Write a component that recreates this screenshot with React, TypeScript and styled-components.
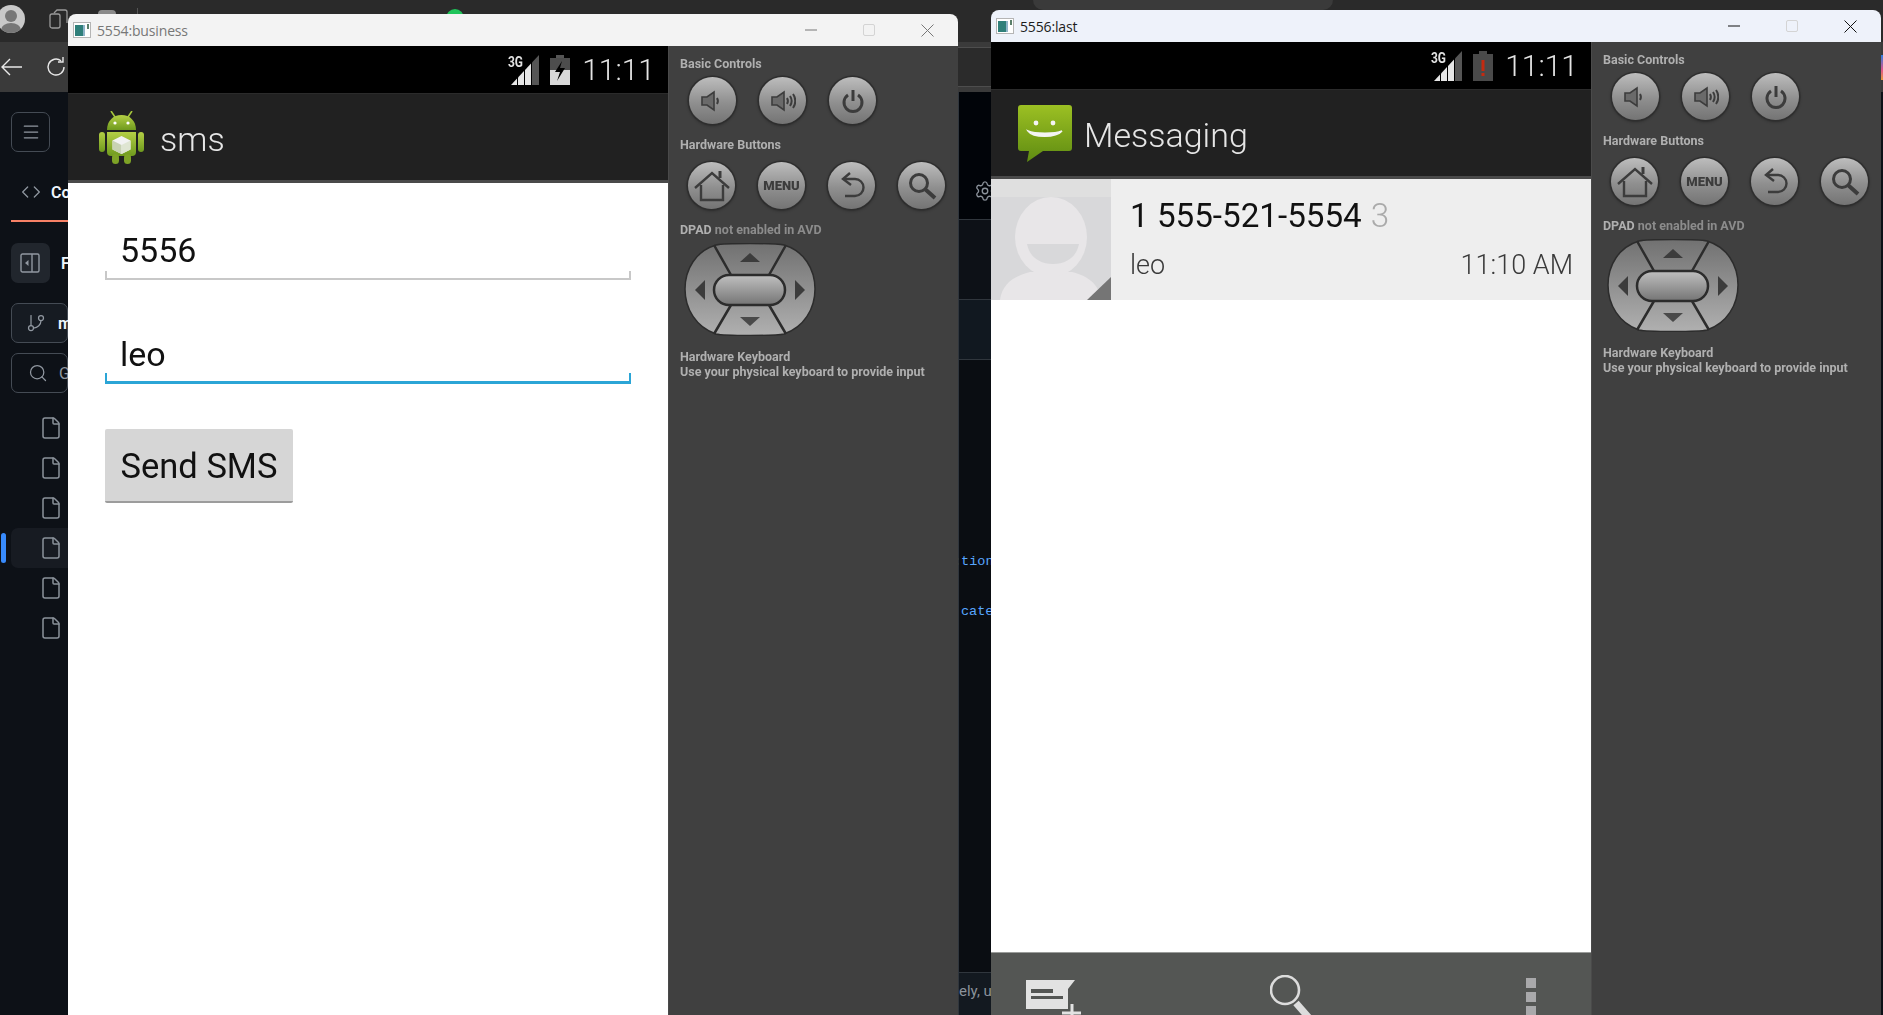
import {ReactNode} from 'react';
import styled, {createGlobalStyle} from 'styled-components';
import {Code, File, GitBranch, Menu, Search, Settings} from 'lucide-react';

const GlobalStyle = createGlobalStyle`
  html, body {
    margin: 0;
    padding: 0;
    background: #0d1117;
    overflow: hidden;
  }
  * {
    box-sizing: border-box;
  }
  svg {
    flex-shrink: 0;
  }
`;

const Desktop = styled.div`
  position: relative;
  width: 1883px;
  height: 1015px;
  overflow: hidden;
  font-family: Roboto, 'Liberation Sans', sans-serif;
`;

/* browser left open behind the emulators */
const Backdrop = styled.div`
  width: 100%;
  height: 100%;
  display: flex;
  flex-direction: column;
`;

const BrowserTabs = styled.div`
  height: 42px;
  flex-shrink: 0;
  background: #2a2a2a;
  display: flex;
  align-items: flex-start;
`;

const Profile = styled.div`
  width: 28px;
  height: 28px;
  margin: 5px 0 0 -3px;
  border-radius: 50%;
  background: #c9c9c9;
  overflow: hidden;
  flex-shrink: 0;
`;

const TabStack = styled.div`
  margin: 9px 0 0 24px;
  color: #9a9a9a;
  display: flex;
`;

const TabStub = styled.div`
  width: 18px;
  height: 22px;
  margin: 10px 0 0 29px;
  border-radius: 4px;
  background: #8a8a8a;
`;

const TabDivider = styled.div`
  width: 1px;
  height: 22px;
  margin: 8px 0 0 21px;
  background: #555;
`;

const GreenDot = styled.div`
  width: 18px;
  height: 18px;
  margin: 9px 0 0 308px;
  border-radius: 50%;
  background: #1fc45a;
`;

const OpenTab = styled.div`
  width: 300px;
  height: 22px;
  margin: -12px 0 0 569px;
  border-radius: 10px;
  background: #3a3a3a;
`;

const BrowserNav = styled.div`
  height: 50px;
  flex-shrink: 0;
  background: #3a3a3a;
  display: flex;
  align-items: center;
  color: #e8e8e8;
`;

const NavIcon = styled.div<{$left: number}>`
  margin-left: ${({$left}) => $left}px;
  display: flex;
`;

const AddressBar = styled.div`
  flex: 1;
  height: 40px;
  margin-left: 100px;
  background: #2b2b2b;
  border-top: 1px solid #4d4d4d;
  border-bottom: 1px solid #4d4d4d;
`;

const EdgeMark = styled.div`
  width: 2px;
  height: 25px;
  background: linear-gradient(#2f7de0, #e0558a 60%, #e89a3c);
`;

const RepoBody = styled.div`
  flex: 1;
  display: grid;
  grid-template-columns: 68px 890px 33px 1fr;
  background: #0d1117;
  min-height: 0;
`;

const Rail = styled.div`
  padding: 20px 0 0 11px;
  display: flex;
  flex-direction: column;
`;

const RailBox = styled.div<{$width?: number; $fill?: string; $plain?: boolean; $top: number; $gap?: number; $pad?: number}>`
  width: ${({$width}) => ($width ? `${$width}px` : 'auto')};
  height: 40px;
  margin-top: ${({$top}) => $top}px;
  flex-shrink: 0;
  background: ${({$fill}) => $fill || 'transparent'};
  border: ${({$plain}) => ($plain ? 'none' : '1px solid #444b54')};
  border-radius: 7px;
  color: #9198a1;
  display: flex;
  align-items: center;
  gap: ${({$gap}) => $gap || 12}px;
  padding-left: ${({$pad}) => $pad || 9}px;
  white-space: nowrap;
`;

const RailTab = styled.div`
  height: 50px;
  margin-top: 20px;
  flex-shrink: 0;
  border-bottom: 2px solid #f78166;
  color: #9198a1;
  display: flex;
  align-items: center;
  gap: 10px;
  padding: 0 0 8px 10px;
  white-space: nowrap;
`;

const RailText = styled.span`
  color: #f0f6fc;
  font-size: 16px;
  font-weight: 600;
`;

const FileList = styled.div`
  margin-top: 15px;
  display: flex;
  flex-direction: column;
`;

const FileRow = styled.div<{$selected?: boolean}>`
  position: relative;
  height: 40px;
  padding-left: 28px;
  display: flex;
  align-items: center;
  color: #8b929b;
  border-radius: 7px 0 0 7px;
  background: ${({$selected}) => ($selected ? '#171b22' : 'transparent')};

  &::before {
    content: '';
    display: ${({$selected}) => ($selected ? 'block' : 'none')};
    position: absolute;
    left: -10px;
    top: 5px;
    width: 5px;
    height: 30px;
    border-radius: 3px;
    background: #388bfd;
  }
`;

const CodeStrip = styled.div`
  grid-column: 3;
  display: flex;
  flex-direction: column;
  border-left: 1px solid #30363d;
`;

const StripHead = styled.div`
  height: 128px;
  flex-shrink: 0;
  background: #010409;
  border-bottom: 1px solid #30363d;
  display: flex;
  align-items: flex-end;
  padding: 0 0 17px 15px;
  color: #8b929b;
`;

const StripRow = styled.div<{$height: number; $fill: string}>`
  height: ${({$height}) => $height}px;
  flex-shrink: 0;
  background: ${({$fill}) => $fill};
  border-bottom: 1px solid #30363d;
`;

const StripCode = styled.div`
  flex: 1;
  padding-top: 177px;
  background: #0a0d12;
  font-family: 'Liberation Mono', monospace;
  font-size: 13.5px;
  line-height: 50px;
  color: #58a6ff;
`;

const CodeLine = styled.div<{$indent: number}>`
  white-space: nowrap;
  margin-left: ${({$indent}) => $indent}px;
`;

const StripFoot = styled.div`
  height: 43px;
  flex-shrink: 0;
  background: #131920;
  border-top: 1px solid #30363d;
  font-size: 15px;
  line-height: 36px;
  color: #8b929b;
  white-space: nowrap;
`;

/* emulator windows */
const Window = styled.div<{$left: number; $top: number; $width: number}>`
  position: absolute;
  left: ${({$left}) => $left}px;
  top: ${({$top}) => $top}px;
  width: ${({$width}) => $width}px;
  height: ${({$top}) => 1015 - $top}px;
  display: flex;
  flex-direction: column;
  border-radius: 8px 8px 0 0;
  overflow: hidden;
`;

const TitleBar = styled.div<{$active?: boolean}>`
  height: 32px;
  flex-shrink: 0;
  background: ${({$active}) => ($active ? '#eef2fa' : '#f3f3f3')};
  color: ${({$active}) => ($active ? '#1c1c1c' : '#777')};
  display: flex;
  align-items: center;
  padding: 0 24px 0 5px;
  font-family: 'Open Sans', sans-serif;
  font-size: 14px;
`;

const TitleIcon = styled.svg`
  margin-right: 6px;
`;

const TitleText = styled.span`
  flex: 1;
  letter-spacing: -0.15px;
`;

const TitleControls = styled.div`
  display: flex;
  align-items: center;
  gap: 46px;
`;

const MaxBox = styled.div`
  width: 12px;
  height: 12px;
  border: 1px solid #d4d4d4;
  border-radius: 2px;
`;

const WindowBody = styled.div`
  flex: 1;
  display: flex;
  min-height: 0;
  filter: blur(0.35px);
`;

const Phone = styled.div`
  width: 600px;
  flex-shrink: 0;
  display: flex;
  flex-direction: column;
  background: #fff;
`;

const StatusBar = styled.div`
  height: 47px;
  flex-shrink: 0;
  background: #000;
  display: flex;
  align-items: center;
  justify-content: flex-end;
  gap: 11px;
  padding-right: 13px;
`;

const Clock = styled.span`
  margin-left: 1px;
  font-size: 30px;
  font-weight: 300;
  line-height: 1;
  color: #e4e4e4;
`;

const ActionBar = styled.div<{$left: number; $gap: number}>`
  height: 90px;
  flex-shrink: 0;
  background: #212121;
  border-top: 1px solid #2b2b2b;
  border-bottom: 3px solid #4a4a4a;
  display: flex;
  align-items: center;
  padding-left: ${({$left}) => $left}px;
  gap: ${({$gap}) => $gap}px;
`;

const ActionTitle = styled.span`
  color: #e6e6e6;
  font-size: 34px;
  font-weight: 300;
  padding-top: 3px;
`;

const FormScreen = styled.div`
  flex: 1;
  padding: 39px 37px 0 37px;
  display: flex;
  flex-direction: column;
`;

const Field = styled.div<{$focused?: boolean}>`
  position: relative;
  height: 58px;
  flex-shrink: 0;
  padding-left: 15px;
  font-size: 34px;
  line-height: 57px;
  color: #111;
  border-bottom: ${({$focused}) => ($focused ? '3px solid #2ba5d6' : '2px solid #c8c8c8')};
  margin-bottom: 46px;

  &::before,
  &::after {
    content: '';
    position: absolute;
    bottom: 0;
    width: 2px;
    height: ${({$focused}) => ($focused ? 8 : 7)}px;
    background: ${({$focused}) => ($focused ? '#2ba5d6' : '#c8c8c8')};
  }
  &::before {
    left: 0;
  }
  &::after {
    right: 0;
  }
`;

const SendButton = styled.button`
  width: 188px;
  height: 74px;
  margin-top: -1px;
  border: none;
  border-bottom: 2px solid #9c9c9c;
  border-radius: 2px;
  background: #d6d6d6;
  color: #111;
  font-family: inherit;
  font-size: 34.5px;
  padding: 2px 0 0;
`;

const ThreadScreen = styled.div`
  flex: 1;
  display: flex;
  flex-direction: column;
  min-height: 0;
`;

const ThreadRow = styled.div`
  height: 121px;
  flex-shrink: 0;
  display: flex;
  background: #eeeeee;
`;

const ThreadText = styled.div`
  flex: 1;
  padding: 17px 18px 0 19px;
`;

const ThreadName = styled.div`
  font-size: 33.2px;
  line-height: 40px;
  color: #111;
`;

const ThreadCount = styled.span`
  color: #aaa;
  font-weight: 300;
  margin-left: 9px;
`;

const ThreadMeta = styled.div`
  margin-top: 9px;
  display: flex;
  justify-content: space-between;
  font-size: 27px;
  line-height: 40px;
  color: #3a3a3a;
  font-weight: 300;
`;

const ThreadGap = styled.div`
  flex: 1;
  background: #fff;
`;

const BottomBar = styled.div`
  height: 63px;
  flex-shrink: 0;
  background: #545654;
  border-top: 1px solid #9a9c9a;
  display: flex;
  justify-content: space-between;
  padding: 22px 55px 0 35px;
  overflow: hidden;
`;

const Dots = styled.div`
  display: flex;
  flex-direction: column;
  gap: 4px;
  padding-top: 3px;
`;

const Dot = styled.div`
  width: 10px;
  height: 10px;
  flex-shrink: 0;
  background: #a9a9ab;
`;

const Panel = styled.div`
  flex: 1;
  background: #404040;
  border-left: 1px solid #4a4a4a;
  padding: 10px 0 0 11px;
  font-size: 12.5px;
  font-weight: 700;
  color: #b0b0b0;
`;

const PanelLabel = styled.div<{$top?: number}>`
  margin-top: ${({$top}) => $top || 0}px;
  line-height: 16px;
  white-space: nowrap;
`;

const Muted = styled.span`
  color: #8c8c8c;
`;

const ButtonRow = styled.div<{$left: number; $top: number}>`
  display: flex;
  gap: 23px;
  margin: ${({$top}) => $top}px 0 0 ${({$left}) => $left}px;
`;

const RoundButton = styled.div`
  width: 47px;
  height: 47px;
  border-radius: 50%;
  background: linear-gradient(#bdbdbd, #8f8f8f 55%, #747474);
  box-shadow: 0 0 0 1.5px #2e2e2e, 0 1px 3px 1px rgba(0, 0, 0, 0.3);
  display: flex;
  align-items: center;
  justify-content: center;
  color: #3c3c3c;
`;

const MenuLabel = styled.span`
  font-size: 13px;
  font-weight: 900;
  color: #3c3c3c;
`;

const Dpad = styled.svg`
  display: block;
  margin: 5px 0 0 4px;
`;

const KeyboardNote = styled.div`
  margin-top: 13px;
  line-height: 15px;
  white-space: nowrap;
`;

const Caption = ({children, active}: {children: ReactNode; active?: boolean}) => (
  <TitleBar $active={active}>
    <TitleIcon width="18" height="16" viewBox="0 0 18 16">
      <rect x="0.5" y="0.5" width="17" height="15" fill="#fff" stroke="#b5b5b5" />
      <rect x="2" y="3" width="8" height="11" fill="#2f7f7a" />
      <rect x="10" y="3" width="2" height="11" fill="#8fb4c8" />
      <rect x="14" y="2" width="2" height="5" fill="#5a7f6a" />
    </TitleIcon>
    <TitleText>{children}</TitleText>
    <TitleControls>
      <svg width="12" height="12" viewBox="0 0 12 12">
        <path d="M0 6h12" stroke={active ? '#111' : '#777'} strokeWidth="1" />
      </svg>
      <MaxBox />
      <svg width="13" height="13" viewBox="0 0 13 13">
        <path d="M0.5 0.5l12 12M12.5 0.5l-12 12" stroke={active ? '#111' : '#777'} strokeWidth="1" fill="none" />
      </svg>
    </TitleControls>
  </TitleBar>
);

const SignalIcon = () => (
  <svg width="31" height="30" viewBox="0 0 31 30">
    <text x="0" y="12" fontFamily="Roboto, sans-serif" fontWeight="700" fontSize="14" fill="#e2e2e2" textLength="15" lengthAdjust="spacingAndGlyphs">
      3G
    </text>
    <path d="M3 30l6-6.4V30z" fill="#e6e6e6" />
    <path d="M10 30v-7.5l6-6.4V30z" fill="#e6e6e6" />
    <path d="M17 30V15l6-6.4V30z" fill="#e6e6e6" />
    <path d="M24 30V7.5L31 0v30z" fill="#555" />
  </svg>
);

const ChargingBattery = () => (
  <svg width="20" height="30" viewBox="0 0 20 30">
    <rect x="6" y="0" width="8" height="3" fill="#555" />
    <rect x="0" y="3" width="20" height="27" fill="#d8d8d8" />
    <rect x="0" y="3" width="20" height="12" fill="#4d4d4d" />
    <path d="M12 6L5 17h5l-3 9 8-13h-5z" fill="#000" />
  </svg>
);

const AlertBattery = () => (
  <svg width="20" height="30" viewBox="0 0 20 30">
    <rect x="6" y="0" width="8" height="3" fill="#4a4a4a" />
    <rect x="0" y="3" width="20" height="27" fill="#4a4a4a" />
    <rect x="8.5" y="9" width="3" height="11" fill="#c42a10" />
    <rect x="8.5" y="22" width="3" height="3" fill="#c42a10" />
  </svg>
);

const AndroidIcon = () => (
  <svg width="45" height="53" viewBox="0 0 45 53">
    <defs>
      <linearGradient id="droid" x1="0" y1="0" x2="0" y2="1">
        <stop offset="0" stopColor="#b4cf45" />
        <stop offset="1" stopColor="#6f9a1e" />
      </linearGradient>
    </defs>
    <path d="M12 0l4 6M33 0l-4 6" stroke="#a6c63c" strokeWidth="1.6" />
    <path d="M8 19C8 10 14 4 22.5 4S37 10 37 19z" fill="url(#droid)" />
    <circle cx="16" cy="12" r="1.6" fill="#fff" />
    <circle cx="29" cy="12" r="1.6" fill="#fff" />
    <path d="M8 21h29v20a4 4 0 0 1-4 4H12a4 4 0 0 1-4-4z" fill="url(#droid)" />
    <rect x="0" y="21" width="6" height="20" rx="3" fill="url(#droid)" />
    <rect x="39" y="21" width="6" height="20" rx="3" fill="url(#droid)" />
    <rect x="13" y="43" width="7" height="10" rx="3.5" fill="#7ea326" />
    <rect x="25" y="43" width="7" height="10" rx="3.5" fill="#7ea326" />
    <path d="M22.5 25l9 4.5v9L22.5 43l-9-4.5v-9z" fill="#f2f2f2" />
    <path d="M22.5 34v9l-9-4.5v-9z" fill="#c8d2b4" />
    <path d="M22.5 34v9l9-4.5v-9z" fill="#dfe5d2" />
  </svg>
);

const MessagingIcon = () => (
  <svg width="54" height="57" viewBox="0 0 54 57">
    <defs>
      <linearGradient id="bubble" x1="0" y1="0" x2="0" y2="1">
        <stop offset="0" stopColor="#9cc023" />
        <stop offset="1" stopColor="#5f8c12" />
      </linearGradient>
    </defs>
    <path d="M3 0h48a3 3 0 0 1 3 3v40a3 3 0 0 1-3 3H25L9 57l2-11H3a3 3 0 0 1-3-3V3a3 3 0 0 1 3-3z" fill="url(#bubble)" />
    <circle cx="18" cy="18" r="2.4" fill="#f4f4f4" />
    <circle cx="35" cy="18" r="2.4" fill="#f4f4f4" />
    <path d="M10 26c5 7 28 7 34 0-7 3-27 3-34 0z" fill="#f4f4f4" stroke="#f4f4f4" strokeWidth="1.4" />
  </svg>
);

const ContactAvatar = () => (
  <svg width="120" height="121" viewBox="0 0 120 121" style={{display: 'block'}}>
    <rect width="120" height="121" fill="#d8d8da" />
    <rect width="120" height="18" fill="#dfdfdf" />
    <path d="M9 121c2-16 14-24 30-28h42c16 4 27 12 29 28z" fill="#e8e6e8" />
    <ellipse cx="60" cy="58" rx="36" ry="40" fill="#e8e6e8" />
    <path d="M36 65h52c-2 12-12 20-26 20s-24-8-26-20z" fill="#d8d8da" />
    <path d="M96 121l24-23v23z" fill="#757575" />
  </svg>
);

const VolumeIcon = ({waves}: {waves: number}) => (
  <svg width="26" height="26" viewBox="0 0 26 26" fill="none" stroke="currentColor">
    <path d="M2 9h5l7-5v18l-7-5H2z" fill="#6a6a6a" stroke="currentColor" strokeWidth="1.6" />
    <path d="M17 10c1.2 2 1.2 4 0 6" strokeWidth="2" />
    {waves > 1 && <path d="M20 8c2 3 2 7 0 10" strokeWidth="2" />}
    {waves > 1 && <path d="M23 6c3 4 3 10 0 14" strokeWidth="2" />}
  </svg>
);

const PowerIcon = () => (
  <svg width="26" height="26" viewBox="0 0 26 26" fill="none" stroke="currentColor" strokeWidth="3">
    <path d="M8 7a9 9 0 1 0 10 0" />
    <path d="M13 2v11" />
  </svg>
);

const HomeIcon = () => (
  <svg width="36" height="32" viewBox="0 0 36 32" fill="none" stroke="currentColor" strokeWidth="2.4">
    <path d="M1 18L18 3l17 15" />
    <path d="M7 15v15h22V15" />
    <path d="M26 8V1" strokeWidth="3" />
  </svg>
);

const BackIcon = () => (
  <svg width="30" height="30" viewBox="0 0 30 30" fill="none" stroke="currentColor" strokeWidth="2.4">
    <path d="M13 2L6 8l8 6" />
    <path d="M7 8h11a8 8 0 0 1 0 17H8" />
  </svg>
);

const LensIcon = () => (
  <svg width="30" height="30" viewBox="0 0 30 30" fill="none" stroke="currentColor">
    <circle cx="12" cy="12" r="8.5" strokeWidth="3" />
    <path d="M18.5 18.5L28 27" strokeWidth="4" />
  </svg>
);

const DpadDrawing = ({id}: {id: string}) => (
  <Dpad width="132" height="93" viewBox="0 0 132 93">
    <defs>
      <linearGradient id={`${id}-pad`} x1="0" y1="0" x2="0" y2="1">
        <stop offset="0" stopColor="#717171" />
        <stop offset="1" stopColor="#b0b0b0" />
      </linearGradient>
      <linearGradient id={`${id}-pill`} x1="0" y1="0" x2="0" y2="1">
        <stop offset="0" stopColor="#c0c0c0" />
        <stop offset="1" stopColor="#757575" />
      </linearGradient>
    </defs>
    <path
      d="M32 2C12 8 1 26 1 46s11 38 31 45c8 2 60 2 68 0 20-7 31-25 31-45S120 8 100 2c-8-2-60-2-68 0z"
      fill={`url(#${id}-pad)`}
      stroke="#2c2c2c"
      strokeWidth="1.5"
    />
    <path d="M30 2l17 30M102 2L85 32M47 62L30 91M85 62l17 29" stroke="#2c2c2c" strokeWidth="2.5" />
    <rect x="30" y="32" width="71" height="30" rx="15" fill={`url(#${id}-pill)`} stroke="#2c2c2c" strokeWidth="2.5" />
    <path d="M56 19l10-9 10 9z" fill="#3c3c3c" />
    <path d="M56 74l10 9 10-9z" fill="#4a4a4a" />
    <path d="M21 37l-10 10 10 10z" fill="#3c3c3c" />
    <path d="M111 37l10 10-10 10z" fill="#3c3c3c" />
  </Dpad>
);

const ControlPanel = ({id}: {id: string}) => (
  <Panel>
    <PanelLabel>Basic Controls</PanelLabel>
    <ButtonRow $left={9} $top={5}>
      <RoundButton>
        <VolumeIcon waves={1} />
      </RoundButton>
      <RoundButton>
        <VolumeIcon waves={2} />
      </RoundButton>
      <RoundButton>
        <PowerIcon />
      </RoundButton>
    </ButtonRow>
    <PanelLabel $top={13}>Hardware Buttons</PanelLabel>
    <ButtonRow $left={8} $top={9}>
      <RoundButton>
        <HomeIcon />
      </RoundButton>
      <RoundButton>
        <MenuLabel>MENU</MenuLabel>
      </RoundButton>
      <RoundButton>
        <BackIcon />
      </RoundButton>
      <RoundButton>
        <LensIcon />
      </RoundButton>
    </ButtonRow>
    <PanelLabel $top={13}>
      DPAD <Muted>not enabled in AVD</Muted>
    </PanelLabel>
    <DpadDrawing id={id} />
    <KeyboardNote>
      Hardware Keyboard
      <br />
      Use your physical keyboard to provide input
    </KeyboardNote>
  </Panel>
);

const fileRows = [0, 1, 2, 3, 4, 5];

export default function App() {
  return (
    <Desktop>
      <GlobalStyle />
      <Backdrop>
        <BrowserTabs>
          <Profile>
            <svg width="28" height="28" viewBox="0 0 28 28">
              <circle cx="14" cy="11" r="6" fill="#777" />
              <ellipse cx="14" cy="25" rx="10" ry="7" fill="#777" />
            </svg>
          </Profile>
          <TabStack>
            <svg width="20" height="22" viewBox="0 0 20 22" fill="none" stroke="currentColor" strokeWidth="1.3">
              <rect x="1" y="5" width="10" height="14" rx="2" />
              <path d="M5 4l3-3h8a2 2 0 0 1 2 2v11" />
            </svg>
          </TabStack>
          <TabStub />
          <TabDivider />
          <GreenDot />
          <OpenTab />
        </BrowserTabs>
        <BrowserNav>
          <NavIcon $left={1}>
            <svg width="22" height="20" viewBox="0 0 22 20" fill="none" stroke="currentColor" strokeWidth="1.4">
              <path d="M21 10H1M9 2l-8 8 8 8" />
            </svg>
          </NavIcon>
          <NavIcon $left={22}>
            <svg width="22" height="22" viewBox="0 0 22 22" fill="none" stroke="currentColor" strokeWidth="1.4">
              <path d="M19 11a8 8 0 1 1-3-6.2M18 1v5h-5" />
            </svg>
          </NavIcon>
          <AddressBar />
          <EdgeMark />
        </BrowserNav>
        <RepoBody>
          <Rail>
            <RailBox $width={39} $top={0}>
              <Menu size={20} strokeWidth={1.5} />
            </RailBox>
            <RailTab>
              <Code size={20} strokeWidth={1.5} />
              <RailText>Code</RailText>
            </RailTab>
            <RailBox $width={39} $fill="#21262d" $plain $top={21} $gap={21}>
              <svg width="20" height="20" viewBox="0 0 20 20" fill="none" stroke="currentColor" strokeWidth="1.4">
                <rect x="1" y="1" width="18" height="18" rx="1.5" />
                <path d="M12 1v18" />
                <path d="M8.5 7v6L5 10z" fill="currentColor" stroke="none" />
              </svg>
              <RailText>Files</RailText>
            </RailBox>
            <RailBox $fill="#161b22" $top={20} $pad={14}>
              <GitBranch size={20} strokeWidth={1.5} />
              <RailText>main</RailText>
            </RailBox>
            <RailBox $top={10} $pad={16} $gap={11}>
              <Search size={20} strokeWidth={1.5} />
              <span>Go to file</span>
            </RailBox>
            <FileList>
              {fileRows.map((row) => (
                <FileRow key={row} $selected={row === 3}>
                  <File size={24} strokeWidth={1.5} />
                </FileRow>
              ))}
            </FileList>
          </Rail>
          <CodeStrip>
            <StripHead>
              <Settings size={22} strokeWidth={1.5} />
            </StripHead>
            <StripRow $height={80} $fill="#0d1117" />
            <StripRow $height={60} $fill="#111820" />
            <StripCode>
              <CodeLine $indent={-6}>:tion</CodeLine>
              <CodeLine $indent={2}>cate</CodeLine>
            </StripCode>
            <StripFoot>ely, u</StripFoot>
          </CodeStrip>
        </RepoBody>
      </Backdrop>

      <Window $left={68} $top={14} $width={890}>
        <Caption>5554:business</Caption>
        <WindowBody>
          <Phone>
            <StatusBar>
              <SignalIcon />
              <ChargingBattery />
              <Clock>11:11</Clock>
            </StatusBar>
            <ActionBar $left={31} $gap={16}>
              <AndroidIcon />
              <ActionTitle>sms</ActionTitle>
            </ActionBar>
            <FormScreen>
              <Field>5556</Field>
              <Field $focused>leo</Field>
              <SendButton>Send SMS</SendButton>
            </FormScreen>
          </Phone>
          <ControlPanel id="left" />
        </WindowBody>
      </Window>

      <Window $left={991} $top={10} $width={890}>
        <Caption active>5556:last</Caption>
        <WindowBody>
          <Phone>
            <StatusBar>
              <SignalIcon />
              <AlertBattery />
              <Clock>11:11</Clock>
            </StatusBar>
            <ActionBar $left={27} $gap={12}>
              <MessagingIcon />
              <ActionTitle>Messaging</ActionTitle>
            </ActionBar>
            <ThreadScreen>
              <ThreadRow>
                <ContactAvatar />
                <ThreadText>
                  <ThreadName>
                    1 555-521-5554
                    <ThreadCount>3</ThreadCount>
                  </ThreadName>
                  <ThreadMeta>
                    <span>leo</span>
                    <span>11:10 AM</span>
                  </ThreadMeta>
                </ThreadText>
              </ThreadRow>
              <ThreadGap />
              <BottomBar>
                <svg width="56" height="50" viewBox="0 0 56 50">
                  <path d="M0 5h49l-7 9v20H0z" fill="#e2e2e2" />
                  <path d="M5 14h22v4H5zM5 21h32v3H5z" fill="#545654" />
                  <path d="M46 29v20M36 38h19" stroke="#e2e2e2" strokeWidth="3" />
                </svg>
                <svg width="68" height="50" viewBox="0 0 68 50" fill="none" stroke="#dcdcdc">
                  <ellipse cx="15" cy="15" rx="14" ry="14" strokeWidth="2.6" />
                  <path d="M26 28l14 16" strokeWidth="7" />
                </svg>
                <Dots>
                  <Dot />
                  <Dot />
                  <Dot />
                </Dots>
              </BottomBar>
            </ThreadScreen>
          </Phone>
          <ControlPanel id="right" />
        </WindowBody>
      </Window>
    </Desktop>
  );
}
